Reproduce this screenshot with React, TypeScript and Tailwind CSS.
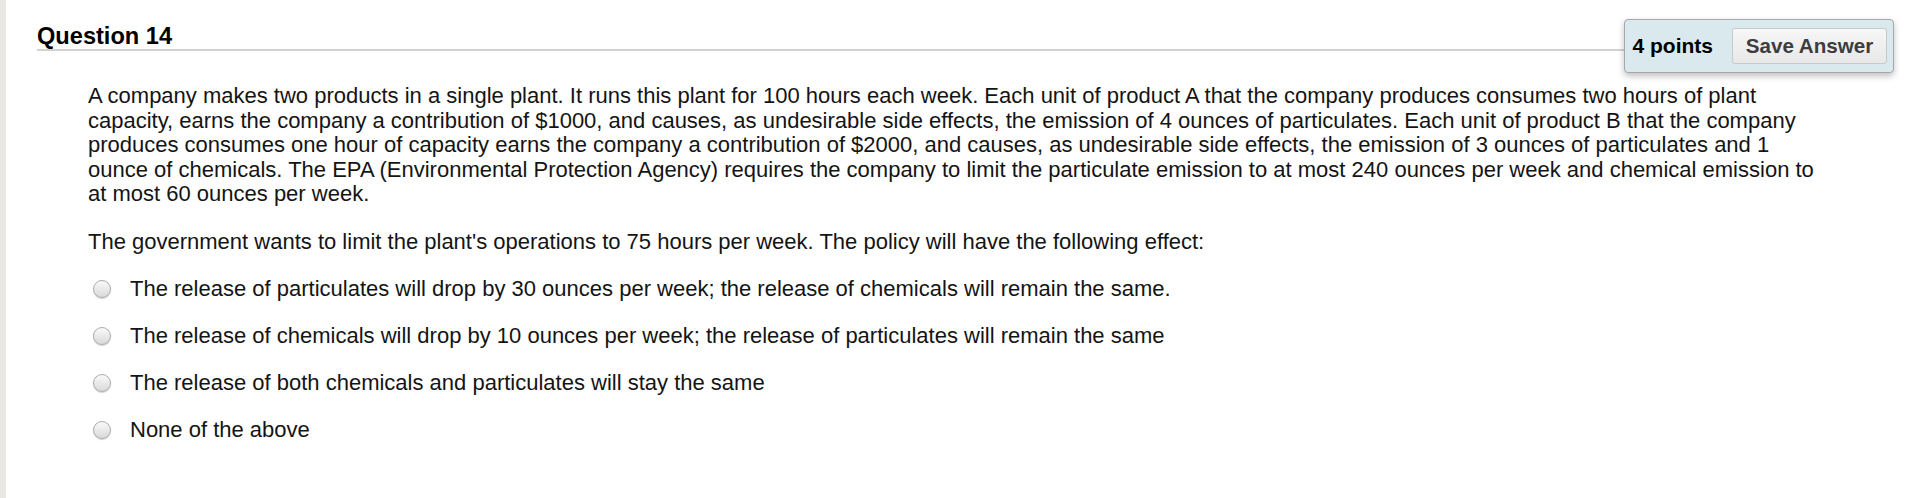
import React from "react";

const options = [
  "The release of particulates will drop by 30 ounces per week; the release of chemicals will remain the same.",
  "The release of chemicals will drop by 10 ounces per week; the release of particulates will remain the same",
  "The release of both chemicals and particulates will stay the same",
  "None of the above",
];

export default function App() {
  return (
    <div className="flex h-[498px] w-full bg-white font-['Liberation_Sans','Helvetica',Arial,sans-serif] text-[#141414]">
      <div className="w-[6px] shrink-0 bg-[#e9e7e1]" />
      <div className="flex flex-1 flex-col pl-[31px] pr-[14px]">
        <div className="flex items-start">
          <div className="mt-[23px] flex-1 border-b-2 border-[#d2d2d2] text-[23.6px] font-bold leading-[26px] text-black">
            Question 14
          </div>
          <div className="mt-[19px] flex h-[54px] items-center gap-[19px] rounded-[4px] border border-[#a5a9ab] bg-[#dae9ee] pl-[7px] pr-[6px] shadow-[0_3px_6px_rgba(0,0,0,0.25)]">
            <span className="text-[21px] font-bold text-black">4 points</span>
            <button className="flex h-[36px] w-[155px] items-center justify-center rounded-[3px] border border-[#c9c9c9] bg-gradient-to-b from-[#f7f7f7] to-[#e8e8e8] text-[20.6px] font-bold text-[#3d3d3d]">
              Save Answer
            </button>
          </div>
        </div>
        <div className="mt-[11px] pl-[51px] pr-[64px] text-[22px] leading-[24.6px]">
          <p>
            A company makes two products in a single plant. It runs this plant for 100 hours each week. Each unit of product A that the company produces consumes two hours of plant capacity, earns the company a contribution of $1000, and causes, as undesirable side effects, the emission of 4 ounces of particulates. Each unit of product B that the company produces consumes one hour of capacity earns the company a contribution of $2000, and causes, as undesirable side effects, the emission of 3 ounces of particulates and 1 ounce of chemicals. The EPA (Environmental Protection Agency) requires the company to limit the particulate emission to at most 240 ounces per week and chemical emission to at most 60 ounces per week.
          </p>
          <p className="mt-[23px]">
            The government wants to limit the plant&apos;s operations to 75 hours per week. The policy will have the following effect:
          </p>
          <div className="mt-[22px] flex flex-col gap-[22.6px]">
            {options.map((o) => (
              <label key={o} className="flex h-[24.6px] items-center">
                <span className="ml-[5px] h-[18px] w-[18px] shrink-0 rounded-full border border-[#acacac] bg-gradient-to-b from-[#fafafa] to-[#d9d9d9] shadow-[0_1px_1px_rgba(0,0,0,0.2)]" />
                <span className="ml-[19px]">{o}</span>
              </label>
            ))}
          </div>
        </div>
      </div>
    </div>
  );
}
